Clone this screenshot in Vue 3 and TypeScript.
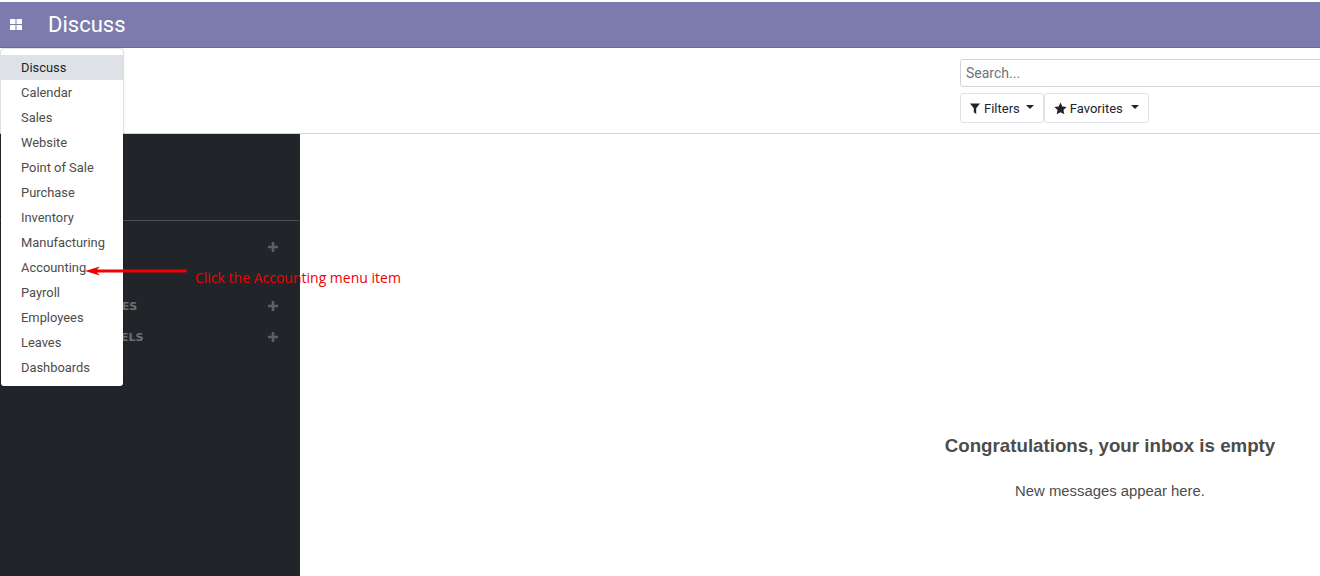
<script setup lang="ts">
const apps = [
  'Discuss',
  'Calendar',
  'Sales',
  'Website',
  'Point of Sale',
  'Purchase',
  'Inventory',
  'Manufacturing',
  'Accounting',
  'Payroll',
  'Employees',
  'Leaves',
  'Dashboards',
]

const groups = [
  { label: 'CHANNELS', gap: 16 },
  { label: 'DIRECT MESSAGES', gap: 40 },
  { label: 'PRIVATE CHANNELS', gap: 12 },
]
</script>

<template>
  <div class="page">
    <header class="navbar">
      <svg class="apps-icon" viewBox="0 0 12 11" width="12" height="11">
        <rect x="0" y="0" width="5.5" height="5" rx="0.6" />
        <rect x="6.5" y="0" width="5.5" height="5" rx="0.6" />
        <rect x="0" y="6" width="5.5" height="5" rx="0.6" />
        <rect x="6.5" y="6" width="5.5" height="5" rx="0.6" />
      </svg>
      <span class="brand">Discuss</span>
    </header>

    <section class="control-panel">
      <div></div>
      <div class="search-side">
        <input class="search" type="text" placeholder="Search..." />
        <div class="btn-group">
          <button class="btn" type="button">
            <svg viewBox="0 0 10 11" width="10" height="11">
              <path d="M0 0.5h10L6.2 5.2V11L3.8 9.2V5.2z" />
            </svg>
            Filters
            <i class="caret"></i>
          </button>
          <button class="btn btn-favorites" type="button">
            <svg viewBox="0 0 24 24" width="13" height="13">
              <path d="M12 1l3.4 7.3 7.9 1-5.8 5.5 1.5 7.9L12 18.8l-7 3.9 1.5-7.9L.7 9.3l7.9-1z" />
            </svg>
            Favorites
            <i class="caret"></i>
          </button>
        </div>
      </div>
    </section>

    <div class="content">
      <aside class="sidebar">
        <div class="sidebar-rule"></div>
        <div
          v-for="group in groups"
          :key="group.label"
          class="sidebar-row"
          :style="{ marginTop: group.gap + 'px' }"
        >
          <span>{{ group.label }}</span>
          <svg viewBox="0 0 10 10" width="10" height="10">
            <path d="M3.7 0h2.6v3.7H10v2.6H6.3V10H3.7V6.3H0V3.7h3.7z" />
          </svg>
        </div>
      </aside>
      <main class="inbox">
        <h2>Congratulations, your inbox is empty</h2>
        <p>New messages appear here.</p>
      </main>
    </div>

    <ul class="app-menu">
      <li v-for="(app, i) in apps" :key="app" :class="{ active: i === 0 }">{{ app }}</li>
    </ul>

    <!-- annotation drawn over the screenshot -->
    <svg class="note-arrow" viewBox="0 0 102 12" width="102" height="12">
      <path d="M0 6 15 1.5 12 4.6H100.5a1.4 1.4 0 0 1 0 2.8H12l3 3.1z" />
    </svg>
    <span class="note-text">Click the Accounting menu item</span>
  </div>
</template>

<style>
html,
body {
  margin: 0;
  overflow: hidden;
  background: #fff;
}
</style>

<style scoped>
.page {
  position: relative;
  width: 1920px;
  height: 576px;
  overflow: hidden;
  display: flex;
  flex-direction: column;
  font-family: "Liberation Sans", Arial, sans-serif;
  color: #212529;
  background: #fff;
}

.navbar {
  display: flex;
  align-items: center;
  height: 45px;
  margin-top: 2px;
  background: #7c7bad;
  color: #fff;
  border-bottom: 1px solid #6b6a9c;
}

.apps-icon {
  fill: #fff;
  margin-left: 10px;
}

.brand {
  margin-left: 26px;
  font-family: Roboto, sans-serif;
  font-size: 22px;
}

.control-panel {
  display: grid;
  grid-template-columns: 1fr 1fr;
  height: 85px;
  border-bottom: 1px solid #ced4da;
}

.search-side {
  padding-top: 11px;
}

.search {
  display: block;
  box-sizing: border-box;
  width: 100%;
  height: 28px;
  padding: 0 5px;
  border: 1px solid #ced4da;
  border-radius: 3px;
  font-family: Roboto, sans-serif;
  font-size: 14px;
  outline: none;
}

.search::placeholder {
  color: #6c757d;
  opacity: 1;
}

.btn-group {
  display: flex;
  margin-top: 6px;
}

.btn {
  display: flex;
  align-items: center;
  gap: 4px;
  height: 30px;
  padding: 0 9px;
  background: #fff;
  border: 1px solid #dee2e6;
  border-radius: 3px;
  font-family: Roboto, sans-serif;
  font-size: 13px;
  color: #212529;
}

.btn svg {
  fill: #212529;
}

.caret {
  width: 0;
  height: 0;
  margin: 0 0 3px 2px;
  border-top: 4px solid #212529;
  border-left: 4px solid transparent;
  border-right: 4px solid transparent;
}

.btn-favorites {
  gap: 3px;
}

.btn-favorites .caret {
  margin-left: 5px;
}

.content {
  flex: 1;
  display: flex;
  min-height: 0;
}

.sidebar {
  box-sizing: border-box;
  width: 300px;
  padding-top: 86px;
  background: #212529;
}

.sidebar-rule {
  height: 1px;
  background: #4a4d52;
}

.sidebar-row {
  display: flex;
  justify-content: space-between;
  align-items: center;
  height: 19px;
  padding: 0 22px 0 20px;
  font-family: "DejaVu Sans", sans-serif;
  font-size: 11.2px;
  font-weight: 700;
  color: #6c7076;
}

.sidebar-row span {
  padding-top: 2px;
}

.sidebar-row svg {
  fill: #5c6066;
}

.inbox {
  flex: 1;
  padding-top: 300px;
  text-align: center;
  color: #4c4c4c;
}

.inbox h2 {
  margin: 0;
  font-size: 18.72px;
  font-weight: 700;
  line-height: 23px;
}

.inbox p {
  margin: 24px 0 0;
  font-size: 14.85px;
  line-height: 20px;
}

.app-menu {
  position: absolute;
  top: 49px;
  left: 1px;
  box-sizing: border-box;
  width: 122px;
  margin: 0;
  padding: 6px 0;
  list-style: none;
  background: #fff;
  border-radius: 3px;
  box-shadow: 0 0 2px rgba(0, 0, 0, 0.45);
  font-family: Roboto, sans-serif;
  font-size: 12.9px;
  color: #4c4c4c;
}

.app-menu li {
  height: 25px;
  padding-left: 20px;
  line-height: 26px;
}

.app-menu li.active {
  background: #dee2e6;
  color: #212529;
}

.note-arrow {
  position: absolute;
  top: 264.5px;
  left: 85px;
  fill: #f00000;
}

.note-text {
  position: absolute;
  top: 268px;
  left: 195px;
  font-family: "Open Sans", sans-serif;
  font-size: 14px;
  color: #f00000;
  white-space: nowrap;
}
</style>
